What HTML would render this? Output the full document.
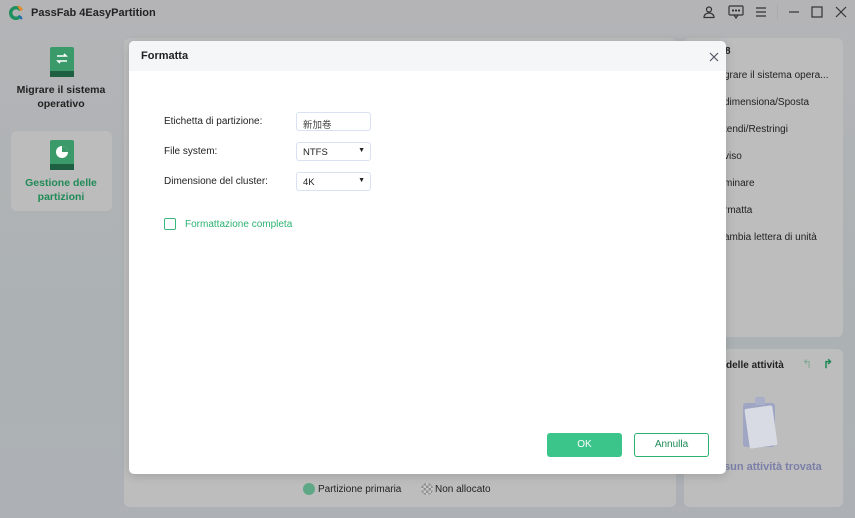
<!DOCTYPE html>
<html><head><meta charset="utf-8"><style>
*{box-sizing:border-box;margin:0;padding:0}
body{width:855px;height:518px;overflow:hidden;position:relative;font-family:"Liberation Sans","Noto Sans CJK SC",sans-serif;background:linear-gradient(180deg,#b4b4b7 0%,#acb2b3 60%,#adb1b6 100%);color:#222}
.abs{position:absolute}
.panel{position:absolute;background:#bdbdbd;border-radius:6px}
.side{font-size:10.5px;font-weight:bold;text-align:center;line-height:14px}
.rt{position:absolute;left:724px;font-size:10px;color:#222}
.dlg{position:absolute;left:129px;top:41px;width:597px;height:433px;background:#fff;border-radius:5px;overflow:hidden;box-shadow:0 2px 10px rgba(0,0,0,.15)}
.hd{height:30px;background:#f5f6f8;font-size:11px;font-weight:bold;padding:9px 12px}
.lbl{position:absolute;left:35px;font-size:10px;color:#222}
.inp{position:absolute;left:167px;width:75px;height:19px;border:1px solid #d8e2f2;border-radius:3px;font-size:9.5px;padding:4px 6px}
.inp .ar{position:absolute;right:5px;top:4px;font-size:7px}
</style></head><body>
<svg class="abs" style="left:7px;top:4px" width="18" height="18" viewBox="0 0 18 18"><path d="M9 2a7 7 0 1 0 6 10.5l-3-1.5a3.6 3.6 0 1 1 0-4l3-1.5A7 7 0 0 0 9 2z" fill="#1f8f5f"/><path d="M10 1.5a7 7 0 0 1 6 4.5l-3 1z" fill="#e08a2a"/><path d="M12 12l3 3" stroke="#1f6fb0" stroke-width="2"/></svg>
<div class="abs" style="left:31px;top:7px;font-size:11px;font-weight:bold;color:#222">PassFab 4EasyPartition</div>
<svg class="abs" style="left:702px;top:5px" width="14" height="14" viewBox="0 0 14 14" fill="none" stroke="#333" stroke-width="1.2"><circle cx="7" cy="4.5" r="2.5"/><path d="M2 12.5h10c0-3-2.5-4.5-5-4.5s-5 1.5-5 4.5z"/></svg>
<svg class="abs" style="left:728px;top:5px" width="16" height="14" viewBox="0 0 16 14" fill="none" stroke="#333" stroke-width="1.2"><rect x="1" y="1" width="14" height="9" rx="1"/><path d="M6 10l2 3 2-3"/><circle cx="5" cy="5.5" r=".5"/><circle cx="8" cy="5.5" r=".5"/><circle cx="11" cy="5.5" r=".5"/></svg>
<svg class="abs" style="left:755px;top:6px" width="12" height="12" viewBox="0 0 12 12" stroke="#333" stroke-width="1.2"><path d="M1 2h10M1 6h10M1 10h10"/></svg>
<div class="abs" style="left:777px;top:4px;width:1px;height:16px;background:#aaa"></div>
<svg class="abs" style="left:788px;top:6px" width="12" height="12" viewBox="0 0 12 12" stroke="#333" stroke-width="1.2"><path d="M1 6h10"/></svg>
<svg class="abs" style="left:811px;top:6px" width="12" height="12" viewBox="0 0 12 12" fill="none" stroke="#333" stroke-width="1.2"><rect x="1" y="1" width="10" height="10"/></svg>
<svg class="abs" style="left:835px;top:6px" width="12" height="12" viewBox="0 0 12 12" stroke="#333" stroke-width="1.2"><path d="M1 1l10 10M11 1L1 11"/></svg>
<svg class="abs" style="left:50px;top:47px" width="24" height="30" viewBox="0 0 24 30"><rect width="24" height="30" rx="2" fill="#3a9a6a"/><rect x="0" y="24" width="24" height="6" fill="#1f5f42"/><path d="M7 9h9l-2-2M17 14H8l2 2" stroke="#fff" stroke-width="1.6" fill="none"/></svg>
<div class="abs side" style="left:10px;top:83px;width:102px">Migrare il sistema<br>operativo</div>
<div class="panel" style="left:11px;top:131px;width:101px;height:80px;background:#bcbcbc"></div>
<svg class="abs" style="left:50px;top:140px" width="24" height="30" viewBox="0 0 24 30"><rect width="24" height="30" rx="2" fill="#3a9a6a"/><rect x="0" y="24" width="24" height="6" fill="#1f5f42"/><circle cx="12" cy="12" r="6" fill="#fff"/><path d="M12 12V6a6 6 0 0 1 6 6z" fill="#3a9a6a"/></svg>
<div class="abs side" style="left:10px;top:176px;width:102px;color:#1f8a56">Gestione delle<br>partizioni</div>
<div class="panel" style="left:124px;top:38px;width:552px;height:469px"></div>
<div class="panel" style="left:684px;top:38px;width:159px;height:299px"></div>
<div class="panel" style="left:684px;top:349px;width:159px;height:158px"></div>
<div class="rt" style="top:46px;left:725px;font-weight:bold">8</div>
<div class="rt" style="top:70px">grare il sistema opera...</div>
<div class="rt" style="top:97px">dimensiona/Sposta</div>
<div class="rt" style="top:124px">tendi/Restringi</div>
<div class="rt" style="top:151px">viso</div>
<div class="rt" style="top:178px">minare</div>
<div class="rt" style="top:205px">rmatta</div>
<div class="rt" style="top:232px">ambia lettera di unità</div>
<div class="abs" style="left:726px;top:360px;font-size:10px;font-weight:bold">delle attività</div>
<div class="abs" style="left:802px;top:357px;font-size:12px;color:#7fa894">↰</div>
<div class="abs" style="left:823px;top:357px;font-size:12px;color:#1f8a56;font-weight:bold">↱</div>
<svg class="abs" style="left:735px;top:395px" width="70" height="60" viewBox="0 0 70 60"><rect x="8" y="8" width="32" height="44" rx="3" fill="#9ea6c4"/><rect x="12" y="12" width="28" height="40" rx="2" fill="#d8dbe4" transform="rotate(-8 26 32)"/><rect x="20" y="2" width="10" height="8" rx="2" fill="#a9afc8"/></svg>
<div class="abs" style="left:724px;top:461px;font-size:11px;font-weight:bold;color:#7b7fa8">sun attività trovata</div>
<div class="abs" style="left:303px;top:483px;width:12px;height:12px;border-radius:50%;background:#5fa886"></div>
<div class="abs" style="left:318px;top:484px;font-size:10px">Partizione primaria</div>
<div class="abs" style="left:421px;top:483px;width:12px;height:12px;border-radius:50%;background:repeating-conic-gradient(#8f8f8f 0 25%,#c9c9c9 0 50%) 0 0/5px 5px"></div>
<div class="abs" style="left:435px;top:484px;font-size:10px">Non allocato</div>
<div class="dlg">
 <div class="hd">Formatta</div>
 <svg class="abs" style="left:580px;top:11px" width="10" height="10" viewBox="0 0 10 10" stroke="#556" stroke-width="1.2"><path d="M1 1l8 8M9 1L1 9"/></svg>
 <div class="lbl" style="top:75px">Etichetta di partizione:</div>
 <div class="inp" style="top:71px;color:#444">新加卷</div>
 <div class="lbl" style="top:105px">File system:</div>
 <div class="inp" style="top:101px">NTFS<span class="ar">▼</span></div>
 <div class="lbl" style="top:135px">Dimensione del cluster:</div>
 <div class="inp" style="top:131px">4K<span class="ar">▼</span></div>
 <div class="abs" style="left:35px;top:177px;width:12px;height:12px;border:1.2px solid #3ab77f;border-radius:2px"></div>
 <div class="abs" style="left:56px;top:178px;font-size:10px;color:#2bb273">Formattazione completa</div>
 <div class="abs" style="left:418px;top:392px;width:75px;height:24px;background:#3cc58a;border-radius:3px;color:#fff;font-size:10px;text-align:center;line-height:24px">OK</div>
 <div class="abs" style="left:505px;top:392px;width:75px;height:24px;border:1.5px solid #2bb273;border-radius:3px;color:#1f8a56;font-size:10px;text-align:center;line-height:21px">Annulla</div>
</div>
</body></html>
